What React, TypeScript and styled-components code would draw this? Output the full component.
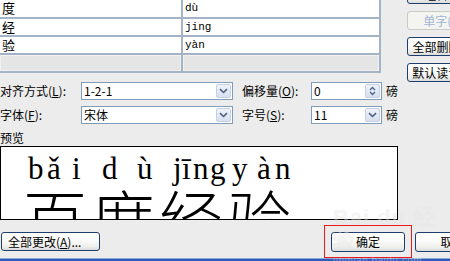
import React from 'react';
import styled, { createGlobalStyle } from 'styled-components';

const Global = createGlobalStyle`
  html, body { margin: 0; padding: 0; background: #ececec; overflow: hidden; }
  body {
    width: 450px; height: 261px;
    font-family: "Noto Sans CJK SC", "Liberation Sans", sans-serif;
    font-size: 12px; color: #000;
  }
`;

const Page = styled.div`
  position: relative;
  width: 450px;
  height: 261px;
  overflow: hidden;
  display: flex;
  flex-direction: column;
`;

const Top = styled.div`
  display: flex;
  height: 225px;
  flex-shrink: 0;
`;

const LeftCol = styled.div`
  width: 398px;
  flex-shrink: 0;
  display: flex;
  flex-direction: column;
`;

const RightCol = styled.div`
  margin-left: 9px;
  margin-top: -15px;
  display: flex;
  flex-direction: column;
  gap: 7px;
`;

const Table = styled.div`
  display: grid;
  grid-template-columns: 181px 196px;
  grid-template-rows: 17px 16px 16px 16px;
  gap: 2px;
  padding: 0 2px 2px 0;
  width: fit-content;
  background: #a5b4c4;
`;

const Cell = styled.div<{ $disabled?: boolean; $mono?: boolean }>`
  background: ${p => (p.$disabled ? '#e5e5e5' : '#ffffff')};
  box-shadow: ${p => (p.$disabled ? 'inset 0 0 0 1px #f1f1f1' : 'none')};
  padding-left: 2px;
  font-size: ${p => (p.$mono ? '11px' : '13px')};
  font-family: ${p => (p.$mono ? '"Liberation Mono", monospace' : '"Noto Sans CJK SC", sans-serif')};
  line-height: 16px;
  white-space: nowrap;
`;

const FormRow = styled.div<{ $top: number }>`
  display: flex;
  align-items: center;
  height: 18px;
  margin-top: ${p => p.$top}px;
`;

const Label = styled.span<{ $w: number; $gap?: number }>`
  width: ${p => p.$w}px;
  margin-left: ${p => p.$gap ?? 0}px;
  flex-shrink: 0;
  white-space: nowrap;
  line-height: 18px;
  font-size: 12px;
`;

const Field = styled.div<{ $w: number }>`
  width: ${p => p.$w}px;
  height: 18px;
  box-sizing: border-box;
  flex-shrink: 0;
  border: 1px solid #7f9db9;
  background: #fff;
  display: flex;
  align-items: center;
  padding: 0 1px 0 2px;
`;

const FieldText = styled.span`
  flex: 1;
  font-size: 12px;
  line-height: 16px;
  white-space: nowrap;
`;

const ArrowBtn = styled.div`
  width: 15px;
  height: 14px;
  box-sizing: border-box;
  border: 1px solid #c3d0e6;
  border-radius: 2px;
  background: linear-gradient(180deg, #eef2f9 0%, #d7e0ef 100%);
  display: flex;
  flex-direction: column;
  align-items: center;
  justify-content: center;
`;

const Unit = styled.span`
  margin-left: 4px;
  font-size: 12px;
  line-height: 18px;
`;

const PreviewLabel = styled.div`
  margin-top: 7px;
  height: 15px;
  line-height: 14px;
  font-size: 12px;
`;

const Preview = styled.div`
  width: 398px;
  height: 74px;
  box-sizing: border-box;
  border: 1px solid #000;
  background: #fff;
  overflow: hidden;
  padding-top: 6px;
`;

const PinyinRow = styled.div`
  display: flex;
  height: 31px;
  padding-left: 27px;
  font-family: "Liberation Serif", serif;
  font-size: 31px;
  line-height: 31px;
`;

const Letter = styled.span<{ $w: number }>`
  width: ${p => p.$w}px;
  flex-shrink: 0;
`;

const HanziRow = styled.div`
  padding-left: 22px;
  font-family: "Noto Sans CJK SC", sans-serif;
  font-weight: 300;
  font-size: 64px;
  line-height: 64px;
  letter-spacing: 4px;
  white-space: nowrap;
`;

const BottomRow = styled.div`
  display: flex;
  align-items: center;
  height: 33px;
  flex-shrink: 0;
`;

const XPButton = styled.div<{ $w: number; $h?: number; $disabled?: boolean; $left?: boolean }>`
  width: ${p => p.$w}px;
  height: ${p => p.$h ?? 19}px;
  flex-shrink: 0;
  box-sizing: border-box;
  border: 1px solid ${p => (p.$disabled ? '#c9cbc6' : '#1f3f6b')};
  border-radius: 3px;
  background: ${p =>
    p.$disabled
      ? '#f4f4f0'
      : 'linear-gradient(180deg, #ffffff 0%, #fbfbfa 45%, #eeeeea 80%, #d9dbe0 100%)'};
  color: ${p => (p.$disabled ? '#a1b4d6' : '#000')};
  font-size: 12px;
  line-height: ${p => (p.$h ?? 19) - 2}px;
  white-space: nowrap;
  overflow: hidden;
  text-align: ${p => (p.$left ? 'left' : 'center')};
  padding-left: ${p => (p.$left ? 6 : 0)}px;
`;

const Highlight = styled.div`
  margin-left: 224px;
  width: 88px;
  height: 33px;
  box-sizing: border-box;
  border: 1px solid #f01818;
  display: flex;
  align-items: center;
  justify-content: center;
  flex-shrink: 0;
`;

const Spacer = styled.div<{ $w: number }>`
  width: ${p => p.$w}px;
  flex-shrink: 0;
`;

const Strip = styled.div`
  height: 3px;
  flex-shrink: 0;
  background: linear-gradient(180deg, #8ea8d8 0px, #8ea8d8 1px, #2d5bbd 1px, #2d5bbd 3px);
`;

const Watermark = styled.div`
  position: absolute;
  left: 333px;
  top: 207px;
  color: rgba(255, 255, 255, 0.4);
  text-shadow: 0 0 1px rgba(0, 0, 0, 0.07);
  font-family: "Liberation Sans", sans-serif;
  pointer-events: none;
  line-height: 1;
`;

const WmBig = styled.div`
  font-size: 22px;
  font-weight: bold;
  letter-spacing: 1px;
`;

const WmSmall = styled.div`
  font-size: 10px;
  margin-top: 5px;
  letter-spacing: 0.5px;
`;

const Chevron = () => (
  <svg width="9" height="6" viewBox="0 0 9 6">
    <path d="M1 1.2 L4.5 4.5 L8 1.2" fill="none" stroke="#4d6185" strokeWidth="1.6" />
  </svg>
);

const UpDown = () => (
  <svg width="7" height="10" viewBox="0 0 7 10">
    <path d="M1 4 L3.5 1.5 L6 4" fill="none" stroke="#4d6185" strokeWidth="1.3" />
    <path d="M1 6 L3.5 8.5 L6 6" fill="none" stroke="#4d6185" strokeWidth="1.3" />
  </svg>
);

const rows: [string, string][] = [
  ['度', 'dù'],
  ['经', 'jing'],
  ['验', 'yàn'],
];

const pinyin: [string, number][] = [
  ['b', 19], ['ǎ', 25], ['i', 30], ['d', 35], ['ù', 36],
  ['j', 9], ['ī', 11], ['n', 17], ['g', 22], ['y', 25], ['à', 18], ['n', 20],
];

export default function App() {
  return (
    <>
      <Global />
      <Page>
        <Top>
          <LeftCol>
            <Table>
              {rows.map(([h, p]) => (
                <React.Fragment key={h}>
                  <Cell>{h}</Cell>
                  <Cell $mono>{p}</Cell>
                </React.Fragment>
              ))}
              <Cell $disabled />
              <Cell $disabled />
            </Table>

            <FormRow $top={9}>
              <Label $w={81}>对齐方式(<u>L</u>):</Label>
              <Field $w={152}>
                <FieldText>1-2-1</FieldText>
                <ArrowBtn><Chevron /></ArrowBtn>
              </Field>
              <Label $w={69} $gap={9}>偏移量(<u>O</u>):</Label>
              <Field $w={71}>
                <FieldText>0</FieldText>
                <ArrowBtn><UpDown /></ArrowBtn>
              </Field>
              <Unit>磅</Unit>
            </FormRow>

            <FormRow $top={6}>
              <Label $w={81}>字体(<u>F</u>):</Label>
              <Field $w={152}>
                <FieldText>宋体</FieldText>
                <ArrowBtn><Chevron /></ArrowBtn>
              </Field>
              <Label $w={69} $gap={9}>字号(<u>S</u>):</Label>
              <Field $w={71}>
                <FieldText>11</FieldText>
                <ArrowBtn><Chevron /></ArrowBtn>
              </Field>
              <Unit>磅</Unit>
            </FormRow>

            <PreviewLabel>预览</PreviewLabel>
            <Preview>
              <PinyinRow>
                {pinyin.map(([l, w], i) => (
                  <Letter key={i} $w={w}>{l}</Letter>
                ))}
              </PinyinRow>
              <HanziRow>百度经验</HanziRow>
            </Preview>
          </LeftCol>

          <RightCol>
            <XPButton $w={75}>组合(<u>G</u>)</XPButton>
            <XPButton $w={75} $disabled>单字(W)</XPButton>
            <XPButton $w={75}>全部删除(<u>C</u>)</XPButton>
            <XPButton $w={75}>默认读音(<u>D</u>)</XPButton>
          </RightCol>
        </Top>

        <BottomRow>
          <Spacer $w={1} />
          <XPButton $w={99} $left>全部更改(<u>A</u>)...</XPButton>
          <Highlight>
            <XPButton $w={74} $h={20}>确定</XPButton>
          </Highlight>
          <Spacer $w={3} />
          <XPButton $w={75} $h={20}>取消</XPButton>
        </BottomRow>
        <Strip />

        <Watermark>
          <WmBig>Bai du 经验</WmBig>
          <WmSmall>jingyan.baidu.com</WmSmall>
        </Watermark>
      </Page>
    </>
  );
}
